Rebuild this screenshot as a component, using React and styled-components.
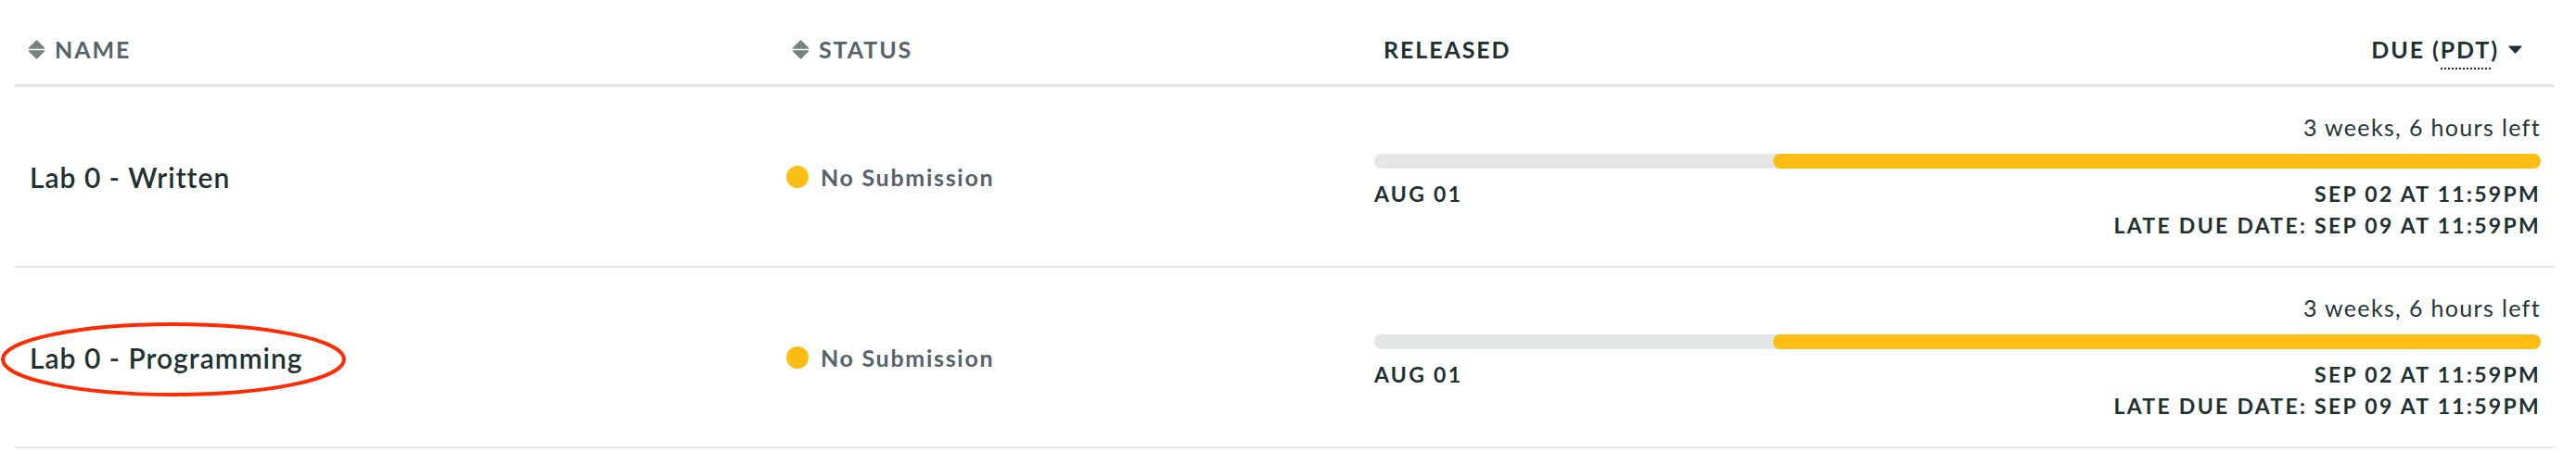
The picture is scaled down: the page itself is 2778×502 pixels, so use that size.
import React from "react";
import styled, { createGlobalStyle } from "styled-components";

const GlobalStyle = createGlobalStyle`
  body {
    margin: 0;
    background: #ffffff;
    font-family: Lato, "Open Sans", sans-serif;
    color: #1e3131;
  }
`;

const Page = styled.div`
  padding: 0 24px 0 16px;
`;

const HeaderRow = styled.div`
  display: grid;
  grid-template-columns: 822px 628px 1fr;
  align-items: center;
  padding: 38px 0 23px;
  border-bottom: 3px solid #e2e5ec;
`;

const HeadCell = styled.div`
  display: flex;
  align-items: center;
  justify-content: ${(p) => (p.$split ? "space-between" : "flex-start")};
  padding-left: ${(p) => p.$padLeft || 0}px;
  padding-right: ${(p) => p.$padRight || 0}px;
`;

const HeadLabel = styled.span`
  display: inline-flex;
  align-items: center;
  gap: 10px;
  font-size: 25px;
  line-height: 30px;
  font-weight: 700;
  letter-spacing: 1.9px;
  color: ${(p) => (p.$muted ? "#56636a" : "#1e3131")};
  white-space: nowrap;
`;

const Abbr = styled.abbr`
  text-decoration: none;
  border-bottom: 2px dotted #1e3131;
  padding-bottom: 5px;
`;

const Row = styled.div`
  position: relative;
  display: grid;
  grid-template-columns: 822px 628px 1fr;
  border-bottom: 2px solid #e2e5ec;
`;

const NameCell = styled.div`
  align-self: center;
  padding-left: 16px;
  font-size: 30px;
  line-height: 36px;
  font-weight: 600;
  letter-spacing: 1px;
  color: #1e3131;
`;

const StatusCell = styled.div`
  align-self: center;
  display: flex;
  align-items: center;
  gap: 13px;
  padding-left: 10px;
  font-size: 25px;
  line-height: 30px;
  font-weight: 700;
  letter-spacing: 1.7px;
  color: #56636a;
`;

const Dot = styled.span`
  width: 24px;
  height: 24px;
  border-radius: 50%;
  background: #fdbe14;
  flex: none;
`;

const Timeline = styled.div`
  display: flex;
  flex-direction: column;
  padding: 28px 14px 30px 16px;
`;

const TimeLeft = styled.div`
  text-align: right;
  font-size: 25px;
  line-height: 30px;
  letter-spacing: 1.35px;
  color: #243636;
  margin-bottom: 14px;
`;

const Track = styled.div`
  display: flex;
  justify-content: flex-end;
  height: 16px;
  border-radius: 8px;
  background: #e4e6e6;
`;

const Fill = styled.div`
  height: 100%;
  border-radius: 8px;
  background: #fdbe14;
`;

const Dates = styled.div`
  display: flex;
  justify-content: space-between;
  margin-top: 13px;
`;

const DateLabel = styled.span`
  font-size: 23px;
  line-height: 28px;
  font-weight: 700;
  letter-spacing: 2.3px;
  color: #1e3131;
  white-space: nowrap;
`;

const LateLine = styled(DateLabel)`
  display: block;
  text-align: right;
  margin-top: 6px;
`;

const Circle = styled.svg`
  position: absolute;
  left: -16px;
  top: 58px;
  pointer-events: none;
`;

function SortIcon() {
  return (
    <svg width="19" height="21" viewBox="0 0 19 21" aria-hidden="true">
      <path d="M9.5 1 L17.5 9 L1.5 9 Z" fill="#77827f" stroke="#77827f" strokeWidth="1.5" strokeLinejoin="round" />
      <path d="M1.5 12 L17.5 12 L9.5 20 Z" fill="#77827f" stroke="#77827f" strokeWidth="1.5" strokeLinejoin="round" />
    </svg>
  );
}

function CaretDown() {
  return (
    <svg width="15" height="9" viewBox="0 0 15 9" aria-hidden="true">
      <path d="M1 1 L14 1 L7.5 8 Z" fill="#1e3131" stroke="#1e3131" strokeWidth="1.2" strokeLinejoin="round" />
    </svg>
  );
}

const assignments = [
  { name: "Lab 0 - Written", left: 65.8 },
  { name: "Lab 0 - Programming", left: 65.8, circled: true },
];

export default function App() {
  return (
    <Page>
      <GlobalStyle />
      <HeaderRow>
        <HeadCell $padLeft={14}>
          <HeadLabel $muted>
            <SortIcon />
            NAME
          </HeadLabel>
        </HeadCell>
        <HeadCell $padLeft={16}>
          <HeadLabel $muted>
            <SortIcon />
            STATUS
          </HeadLabel>
        </HeadCell>
        <HeadCell $split $padLeft={26} $padRight={34}>
          <HeadLabel>RELEASED</HeadLabel>
          <HeadLabel>
            <span>
              DUE (<Abbr title="Pacific Daylight Time">PDT</Abbr>)
            </span>
            <CaretDown />
          </HeadLabel>
        </HeadCell>
      </HeaderRow>

      {assignments.map((a) => (
        <Row key={a.name}>
          <NameCell>{a.name}</NameCell>
          <StatusCell>
            <Dot />
            No Submission
          </StatusCell>
          <Timeline>
            <TimeLeft>3 weeks, 6 hours left</TimeLeft>
            <Track>
              <Fill style={{ width: `${a.left}%` }} />
            </Track>
            <Dates>
              <DateLabel>AUG 01</DateLabel>
              <DateLabel>SEP 02 AT 11:59PM</DateLabel>
            </Dates>
            <LateLine>LATE DUE DATE: SEP 09 AT 11:59PM</LateLine>
          </Timeline>
          {a.circled && (
            <Circle width="374" height="82" viewBox="0 0 374 82" aria-hidden="true">
              <ellipse cx="187" cy="41" rx="184" ry="38" fill="none" stroke="#ff2a00" strokeWidth="4" />
            </Circle>
          )}
        </Row>
      ))}
    </Page>
  );
}
